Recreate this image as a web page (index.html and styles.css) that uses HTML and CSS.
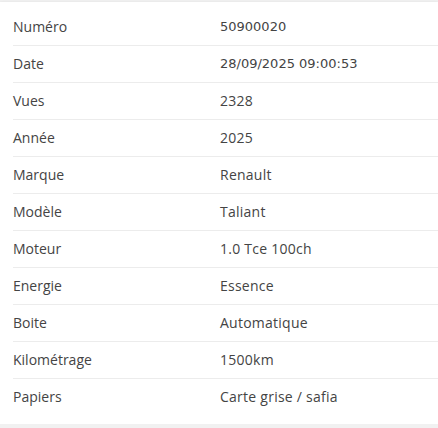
FILE: index.html
```html
<!DOCTYPE html>
<html lang="fr">
<head>
<meta charset="utf-8">
<link rel="stylesheet" href="styles.css">
</head>
<body>
<div class="card">
  <div class="row"><div class="label">Numéro</div><div class="value mono">50900020</div></div>
  <div class="row"><div class="label">Date</div><div class="value mono">28/09/2025 09:00:53</div></div>
  <div class="row"><div class="label">Vues</div><div class="value">2328</div></div>
  <div class="row"><div class="label">Année</div><div class="value">2025</div></div>
  <div class="row"><div class="label">Marque</div><div class="value">Renault</div></div>
  <div class="row"><div class="label">Modèle</div><div class="value">Taliant</div></div>
  <div class="row"><div class="label">Moteur</div><div class="value">1.0 Tce 100ch</div></div>
  <div class="row"><div class="label">Energie</div><div class="value">Essence</div></div>
  <div class="row"><div class="label">Boite</div><div class="value">Automatique</div></div>
  <div class="row"><div class="label">Kilométrage</div><div class="value">1500km</div></div>
  <div class="row"><div class="label">Papiers</div><div class="value">Carte grise / safia</div></div>
</div>
</body>
</html>
```
FILE: styles.css
```css
html, body {
  margin: 0;
  padding: 0;
  background: #f1f1f1;
  font-family: "Open Sans", sans-serif;
  font-size: 14px;
  color: #444;
}
body {
  padding-top: 2px;
}
.card {
  background: #fff;
  padding: 7px 0 9px 13px;
  box-shadow: 0 1px 3px rgba(0,0,0,0.15);
}
.row {
  display: flex;
  align-items: center;
  box-sizing: border-box;
  height: 37px;
  padding-bottom: 2px;
  border-bottom: 1px solid #ececec;
}
.row:last-child {
  border-bottom: none;
  height: 36px;
}
.label {
  width: 207px;
}
.value {
  letter-spacing: 0.25px;
}
.value.mono {
  font-family: "DejaVu Sans", sans-serif;
  font-size: 13px;
  letter-spacing: 0;
}
```
